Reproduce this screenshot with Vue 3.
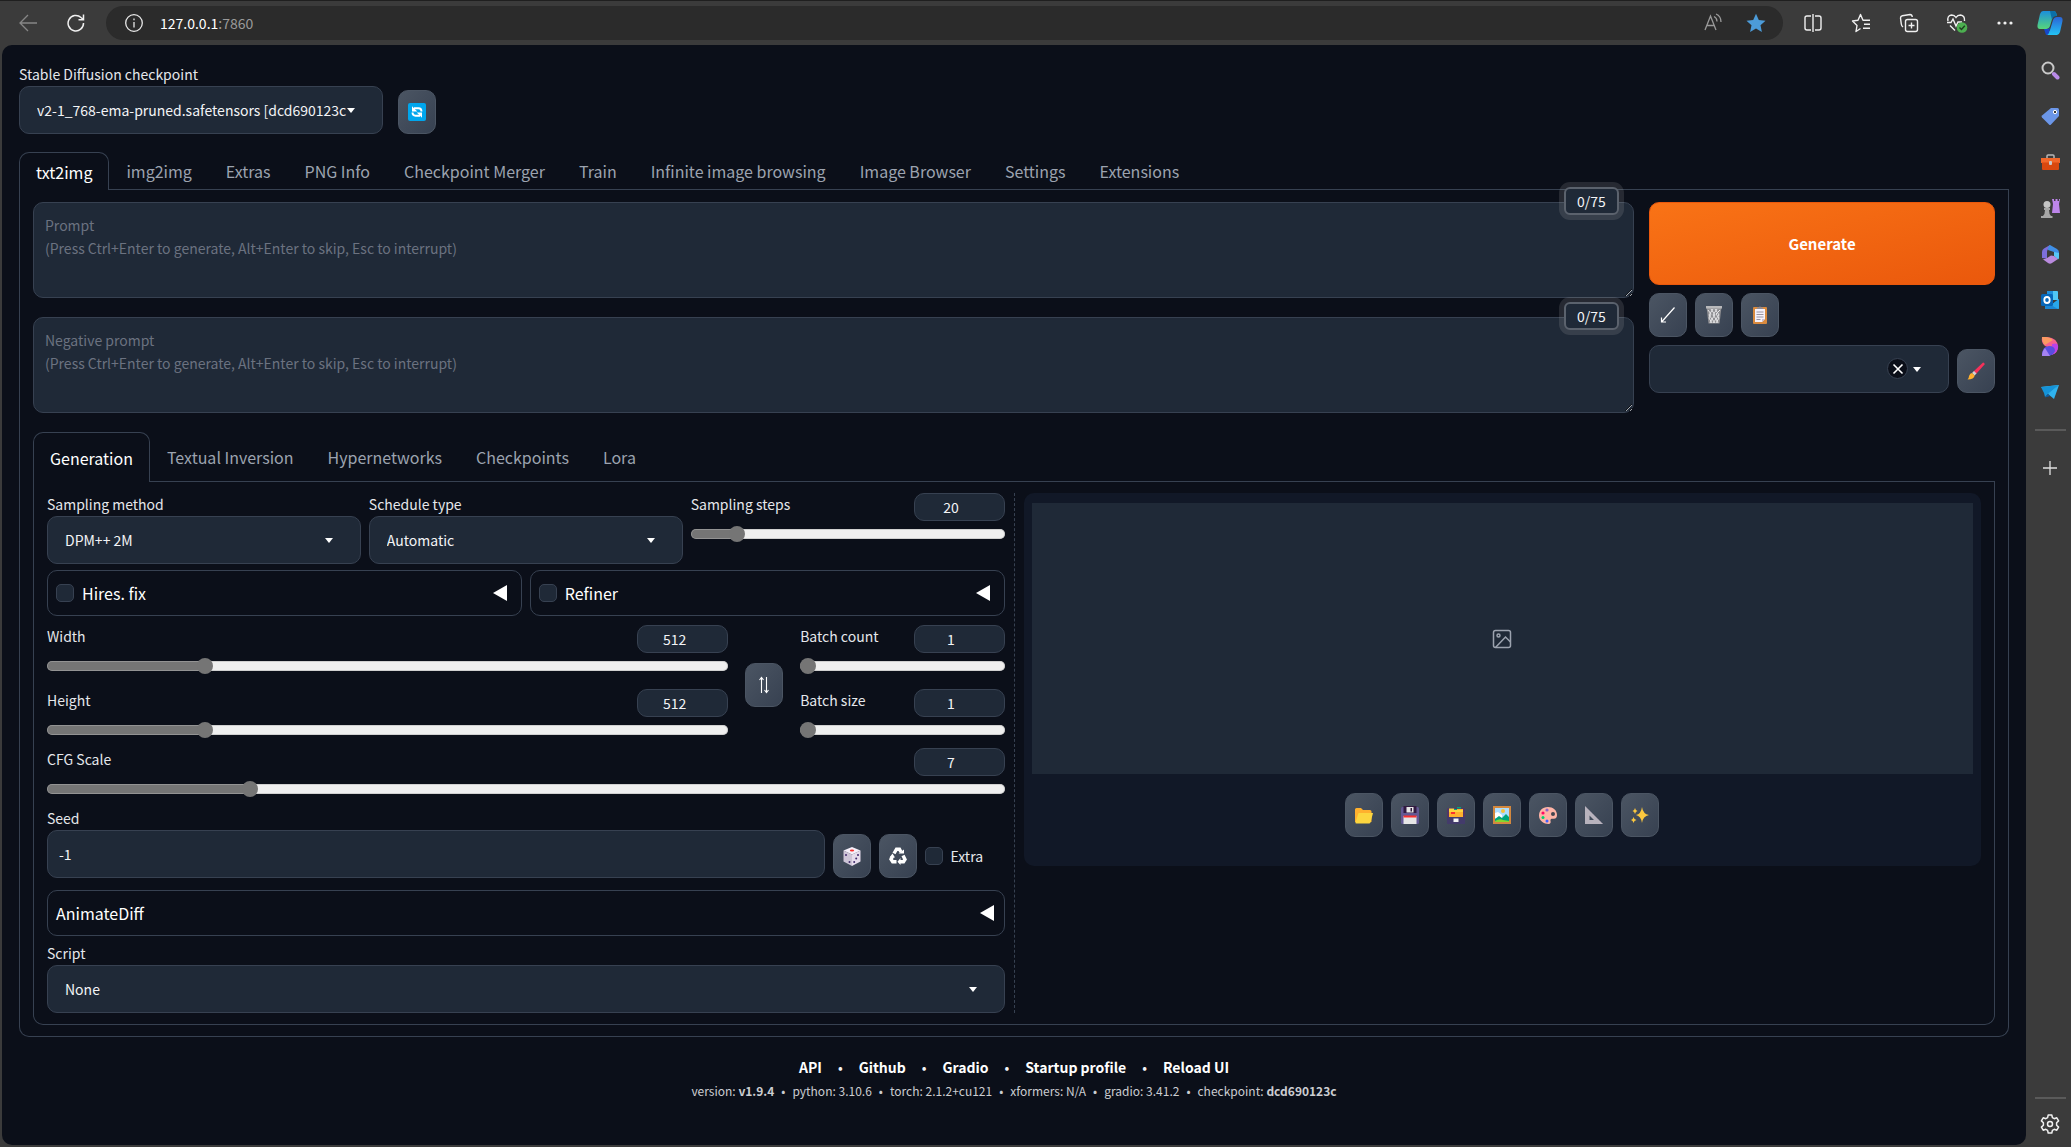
<script setup>
import { ref } from 'vue'

const hint = '(Press Ctrl+Enter to generate, Alt+Enter to skip, Esc to interrupt)'
const prompts = [
  { id: 'prompt', label: 'Prompt' },
  { id: 'negative-prompt', label: 'Negative prompt' },
]

const mainTabs = ['txt2img', 'img2img', 'Extras', 'PNG Info', 'Checkpoint Merger', 'Train', 'Infinite image browsing', 'Image Browser', 'Settings', 'Extensions']
const mainTab = ref('txt2img')
const genTabs = ['Generation', 'Textual Inversion', 'Hypernetworks', 'Checkpoints', 'Lora']
const genTab = ref('Generation')

const steps = ref({ id: 'steps', label: 'Sampling steps', value: 20, min: 1, max: 150 })
const sizes = ref([
  { id: 'width', label: 'Width', value: 512, min: 64, max: 2048 },
  { id: 'height', label: 'Height', value: 512, min: 64, max: 2048 },
])
const batches = ref([
  { id: 'batch-count', label: 'Batch count', value: 1, min: 1, max: 100 },
  { id: 'batch-size', label: 'Batch size', value: 1, min: 1, max: 8 },
])
const cfg = ref({ id: 'cfg', label: 'CFG Scale', value: 7, min: 1, max: 30 })
const seed = ref('-1')

// Filled share of a slider's track, measured to the centre of the thumb.
function fill(s) {
  const share = (s.value - s.min) / (s.max - s.min)
  return { '--fill': `calc(8px + (100% - 16px) * ${share})` }
}

const toolIcons = [
  { name: 'Read generation parameters', art: '<path d="M15.500 1.500 3 15.500M2.500 11.500V16H7" fill="none" stroke="#fff" stroke-width="1.200"/>' },
  { name: 'Clear prompt', art: '<path d="M1.500 1h15l-2 16.500h-11z" fill="#8f8f92"/><path d="M1 0h16v2.500H1z" fill="#b9b9bb"/><path d="M3 4l3 4-2 4 3 5M6 3l4 6-3 4 3 4M10 3l4 6-3 4 2 4M15 4l-4 4 3 4-3 5M12 3 8 9l3 4-3 4M8 3 4 9l3 4-2 4" fill="none" stroke="#e6e6e8"/>' },
  { name: 'Apply styles', art: '<rect x="2" y="1" width="14" height="17" rx="1" fill="#d98a3e"/><path d="M4 3h10v10l-3 3H4z" fill="#f5f1fa"/><path d="M11 16v-3h3z" fill="#c9bfd4"/><path d="M6 3V1.500h2a1 1 0 0 1 2 0h2V3z" fill="#8d8a94"/><path d="M5.500 6h7M5.500 8.500h7M5.500 11h7M5.500 13.500h4" stroke="#9a95a3" fill="none"/>' },
]

const galleryIcons = [
  { name: 'Open images output directory', art: '<path d="M0 3.500Q0 2 1.500 2H6l2 2h7q1.500 0 1.500 1.500V16H0z" fill="#ffb02e"/><path d="M3.500 7H18l-2.500 9.500Q15.200 17.500 14 17.500H1.500Q0 17.500.5 16z" fill="#fcd53f"/>' },
  { name: 'Save the image', art: '<rect x="0" y="1" width="18" height="17" rx="1.500" fill="#635994"/><path d="M2.500 0h13v7h-13z" fill="#321b41"/><path d="M5.500 1h7v5.500h-7z" fill="#e6e6e6"/><path d="M9.500 2H11v3.500H9.500z" fill="#321b41"/><path d="M2.500 10h13v8h-13z" fill="#e6e6e6"/><path d="M2.500 9.500h13v2h-13z" fill="#f8312f"/>' },
  { name: 'Save zip archive', art: '<rect x="0" y="2" width="18" height="16" rx="1.500" fill="#533566"/><path d="M2 3h14v8H2z" fill="#ffb02e"/><path d="M2 2.500h5l1 1.500h8v2H2z" fill="#fcd53f"/><path d="M10 1h4v1.500h-4zM7 3h3v1H7z" fill="#00a67d"/><path d="M4 6h4v2H4z" fill="#f8312f"/><path d="M0 11h18v6q0 1-1 1H1q-1 0-1-1z" fill="#433b6b"/><path d="M6.500 12.500h5v3.500h-5z" fill="#f4f4f4"/>' },
  { name: 'Send to img2img', art: '<rect width="18" height="18" fill="#d3883e"/><path d="M2 2h14v14H2z" fill="#aeddff"/><path d="M2 7l3-1 4 3v3H2z" fill="#fff"/><circle cx="10" cy="5" r="2" fill="#f9c23c"/><path d="M2 13l4-3 3 2 4-4 3 3v5H2z" fill="#00a67d"/><path d="M2 15q5-3 8-1l6 1v1H2z" fill="#86d72f"/>' },
  { name: 'Send to inpaint', art: '<path d="M9 1C3 1 0 5 0 9.500 0 15 5 18 9.500 18c2 0 2.500-1.500 2-3-.5-2 1-2.500 3-2.200 2.500.2 3.500-1.500 3.500-3.800C18 4 14 1 9 1z" fill="#ffb5a7"/><circle cx="14" cy="8" r="2" fill="#45454f"/><circle cx="8" cy="4" r="1.600" fill="#8d65c5"/><circle cx="4" cy="7" r="1.600" fill="#ff0a63"/><circle cx="4" cy="11.500" r="1.500" fill="#00d26a"/><circle cx="8" cy="15" r="1.500" fill="#3f5fff"/>' },
  { name: 'Send to extras', art: '<path d="M0 0 18 18H0zM4.500 9.500v4.500H9z" fill="#b8b3bd" fill-rule="evenodd"/><path d="m1 1 17 17" fill="none" stroke="#8b8496" stroke-dasharray="1 1.500"/>' },
  { name: 'Upscale the image', art: '<path d="M11 1q1 7 7 8-6 1-7 8-1-7-6-8 5-1 6-8zM4 2q.5 2.500 2.500 3Q4.500 5.500 4 8 3.500 5.500 1.500 5 3.500 4.500 4 2zM2.500 11q.5 2.500 3 3-2.500.5-3 3-.5-2.500-2.500-3 2-.5 2.500-3z" fill="#fcc83f"/>' },
]

const sideIcons = [
  { name: 'Search', art: '<circle cx="7" cy="7" r="5.500" fill="none" stroke="#c9c9c9" stroke-width="2"/><path d="m13 13 3.500 3.500" fill="none" stroke="#b98be8" stroke-width="4" stroke-linecap="round"/>' },
  { name: 'Shopping', art: '<path d="M10 1h6.500Q18 1 18 2.500V9l-8 8.500q-1 1-2 0L1 10.500q-1-1 0-2z" fill="#6b96e8"/><circle cx="14" cy="5" r="1.700" fill="#3b3b3b" stroke="#fff"/>' },
  { name: 'Tools', art: '<path d="M6 5V3q0-1 1-1h5q1 0 1 1v2" fill="none" stroke="#b8b8b8" stroke-width="1.500"/><path d="M0 5h19v5H0z" fill="#f2672a"/><path d="M1 9.500h17V16q0 1-1 1H2q-1 0-1-1z" fill="#d9480f"/><rect x="8" y="8" width="3" height="4" rx="1" fill="#c9c9c9"/>' },
  { name: 'Games', art: '<path d="M11 0h2v2h1.500V0h2v2H18V0h1l-1 5 1 9h-8l1-9z" fill="#bd85ea"/><circle cx="6" cy="5.500" r="3.500" fill="#c4c4c4"/><path d="M3 9h6v2H8q0 4 2 6h1.500v2.500H0V17h2q2-2 2-6H3z" fill="#a6a6a6"/>' },
  { name: 'Microsoft 365', art: '<path d="m9 0-6 3.500Q1 4.700 1 7v6l5 .5V7q0-3 3-4z" fill="#7d6fdc"/><path d="m9 0 7 4q2 1 2 3.500V13l-5-2.500V7L7 5q0-4 2-5z" fill="#3f8fe6"/><path d="m13 7 5 1v5q0 1.500-1.500 1l-3.500-3z" fill="#56c6f5"/><path d="m6 13 4-2.500 3 .5 4 3-6 4q-2 1.500-4 0l-5.500-4q2 .5 4.500-1z" fill="#b98ade"/>' },
  { name: 'Outlook', art: '<path d="M7 0h9q1 0 1 1v8H6V1q0-1 1-1z" fill="#50c7f5"/><path d="M6 0h6v9H6z" fill="#1e8fdc"/><path d="M4 9l7 4 7-5v9q0 1-1 1H4z" fill="#1b87d4"/><path d="m18 8-8 6 7 4q1 0 1-1z" fill="#2aa7ea"/><rect y="3" width="12" height="12" rx="1.500" fill="#0767b8"/><ellipse cx="6" cy="9" rx="2.700" ry="3" fill="none" stroke="#fff" stroke-width="1.800"/>' },
  { name: 'Designer', art: '<path d="M1 0h5q11 1 11 10-1 7-5 7-3-7-8-8-4-3-3-9z" fill="#f6608f"/><path d="M1 0h4q4 0 7 3L4 8Q1 5 1 0z" fill="#fb9a62"/><path d="M11 7q7-2 6 4-1 5-6 7z" fill="#bb42e8"/><path d="M1 19q0-10 7-10 6 0 6 5-2 5-8 5z" fill="#5a4de0"/><path d="M1 19q0-5 3-8l5 8z" fill="#a583f2"/>' },
  { name: 'Drop', art: '<path d="M0 4 18 2 8 11z" fill="#49c5f3"/><path d="M0 4l3 6 1 4 3-3L18 2z" fill="#1593d8"/><path d="M18 2 7 11l6 5z" fill="#2fb2ee"/><path d="M4 14.500l3-3.500 2 2z" fill="#0b5fa8"/>' },
]
</script>

<template>
  <div class="browser">
    <header class="toolbar">
      <button class="bar-btn" aria-label="Back">
        <svg width="18" height="18" viewBox="0 0 18 18" fill="none" stroke="#868686" stroke-width="1.300"><path d="M18 9H1M9 1 1 9l8 8" /></svg>
      </button>
      <button class="bar-btn" aria-label="Reload">
        <svg width="18" height="18" viewBox="0 0 18 18" fill="none" stroke="#f0f0f0" stroke-width="1.500"><path d="M16.500 9A7.700 7.700 0 1 1 14 3.500L16.300 5.500M16.500.5v5.200h-5" /></svg>
      </button>
      <div class="address">
        <svg width="20" height="20" viewBox="0 0 20 20" fill="none" stroke="#e8e8e8" stroke-width="1.300"><circle cx="10" cy="10" r="8.300" /><path d="M10 9v5.500" /><path d="M10 5.500v1.700" /></svg>
        <span class="url">127.0.0.1<span class="port">:7860</span></span>
        <svg width="20" height="20" viewBox="0 0 20 20" fill="none" stroke="#9a9a9a" stroke-width="1.300"><path d="M2 17 7.500 3 13 17M4 12.500h7M11 3.500q3 1.500 3 5M13 1q5 2 5 8" /></svg>
        <svg width="20" height="20" viewBox="0 0 20 20" fill="#4c9bd8"><path d="M10 .8 12.800 7l6.700.7-5 4.600 1.400 6.700-5.900-3.400L4.100 19l1.400-6.700-5-4.600L7.200 7z" /></svg>
      </div>
      <div class="actions">
        <button class="bar-btn" aria-label="Split screen">
          <svg width="20" height="20" viewBox="0 0 20 20" fill="none" stroke="#f0f0f0" stroke-width="1.400"><path d="M8 3H4Q2 3 2 5v10q0 2 2 2h4M12 3h4q2 0 2 2v10q0 2-2 2h-4M10 1v18" /></svg>
        </button>
        <button class="bar-btn" aria-label="Favorites">
          <svg width="20" height="20" viewBox="0 0 20 20" fill="none" stroke="#f0f0f0" stroke-width="1.400"><path d="M9.500 15.500 5 18.500l1-6L1.500 8l5.500-.8L9.500 1.500 12 7.200h7M13 11.200h6M12 15.200h7" stroke-linejoin="round" /></svg>
        </button>
        <button class="bar-btn" aria-label="Collections">
          <svg width="20" height="20" viewBox="0 0 20 20" fill="none" stroke="#f0f0f0" stroke-width="1.400"><rect x="6.500" y="6.500" width="12" height="12" rx="2" /><path d="M12.500 9.500v6M9.500 12.500h6M4 14Q2.500 13 2.300 11L1.500 5q0-1.800 1.800-2.200L11 1.500q2 0 2.300 2.500" /></svg>
        </button>
        <button class="bar-btn" aria-label="Browser essentials">
          <svg width="22" height="20" viewBox="0 0 22 20" fill="none" stroke="#f0f0f0" stroke-width="1.400"><path d="M2 8Q1 2.500 5.500 2 8.500 2 10 4.500 11.500 2 14.500 2 19 2.500 18.500 8M4 12.500l5 5M1 9.500h4l2-3.500 3 7 2-4h4" /><circle cx="16" cy="14.500" r="5.300" fill="#4caf50" stroke="none" /><path d="m13.500 14.500 2 2 3.300-3.700" stroke="#1f3d20" /></svg>
        </button>
        <button class="bar-btn" aria-label="Settings and more">
          <svg width="18" height="18" viewBox="0 0 18 18" fill="#f0f0f0"><circle cx="3" cy="9" r="1.600" /><circle cx="9" cy="9" r="1.600" /><circle cx="15" cy="9" r="1.600" /></svg>
        </button>
        <button class="bar-btn copilot" aria-label="Copilot">
          <svg width="26" height="26" viewBox="0 0 26 26">
            <defs>
              <linearGradient id="cop-a" x1="0" y1="0" x2="0" y2="1"><stop stop-color="#1b8fdc" /><stop offset="1" stop-color="#57d67a" /></linearGradient>
              <linearGradient id="cop-b" x1="0" y1="0" x2="0" y2="1"><stop stop-color="#2b63d6" /><stop offset="1" stop-color="#22c4f5" /></linearGradient>
            </defs>
            <path d="M6 1h11q2 0 3 5h-4l-3 10q-1 3-4 3H3q-3 0-2.500-4L3 4q1-3 3-3z" fill="url(#cop-a)" />
            <path d="M20 7h3q3 0 2.500 4L23 22q-1 3-3 3H10l3-5 3-10q1-3 4-3z" fill="url(#cop-b)" />
            <path d="M13 1h4q2 0 3 5-4 0-5 4z" fill="#0b6fa8" /><path d="M7 19h3q2 0 3-2l-1 6q-1 2-3 2-1-3-2-6z" fill="#1747c9" />
          </svg>
        </button>
      </div>
    </header>

    <div class="body">
      <main class="page">
        <div class="checkpoint">
          <div class="field">
            <label for="checkpoint">Stable Diffusion checkpoint</label>
            <div class="select">
              <select id="checkpoint"><option>v2-1_768-ema-pruned.safetensors [dcd690123c</option></select>
              <svg class="caret" viewBox="0 0 8 5"><path d="M0 0h8L4 5z" /></svg>
            </div>
          </div>
          <button class="tool" aria-label="Refresh checkpoints">
            <svg width="18" height="18" viewBox="0 0 18 18"><rect width="18" height="18" rx="2" fill="#00a6ed" /><path d="M6 5.200h4.500q3 0 3 3.300M12 12.800H7.500q-3 0-3-3.300" fill="none" stroke="#fff" stroke-width="1.900" /><path d="M4 3.200v5.300h5.300zM14 14.800V9.500H8.700z" fill="#fff" /></svg>
          </button>
        </div>

        <div class="tabs" role="tablist">
          <button v-for="t in mainTabs" :key="t" class="tab" :class="{ active: t === mainTab }" role="tab" @click="mainTab = t">{{ t }}</button>
          <span class="rest"></span>
        </div>

        <section class="panel">
          <div class="top">
            <div class="prompts">
              <div v-for="p in prompts" :key="p.id" class="prompt">
                <textarea :id="p.id" :aria-label="p.label" :placeholder="p.label + '\n' + hint"></textarea>
                <span class="counter">0/75</span>
              </div>
            </div>
            <div class="run">
              <button class="generate">Generate</button>
              <div class="tools">
                <button v-for="i in toolIcons" :key="i.name" class="tool" :aria-label="i.name"><svg width="18" height="18" viewBox="0 0 18 18" v-html="i.art"></svg></button>
              </div>
              <div class="styles">
                <div class="select">
                  <select id="styles" aria-label="Styles"><option></option></select>
                  <button class="clear" aria-label="Clear styles"><svg width="12" height="12" viewBox="0 0 12 12"><path d="m1.500 1.500 9 9M10.500 1.500l-9 9" stroke="#fff" stroke-width="1.600" /></svg></button>
                  <svg class="caret" viewBox="0 0 8 5"><path d="M0 0h8L4 5z" /></svg>
                </div>
                <button class="tool" aria-label="Edit styles">
                  <svg width="18" height="18" viewBox="0 0 18 18"><path d="M16 .5q2 0 1.500 2L9 12 6.500 9.500z" fill="#f8315a" /><path d="m7 9 2.500 2.500-2 2L5 11z" fill="#d3d3d3" /><path d="M5 11l2.700 2.500q-.7 4-7.200 4 1.500-1.500 1.500-3.500 1-3 3-3z" fill="#ffb02e" /></svg>
                </button>
              </div>
            </div>
          </div>

          <div class="tabs inner" role="tablist">
            <button v-for="t in genTabs" :key="t" class="tab" :class="{ active: t === genTab }" role="tab" @click="genTab = t">{{ t }}</button>
            <span class="rest"></span>
          </div>

          <section class="panel gen">
            <div class="settings">
              <div class="sampling">
                <div class="field">
                  <label for="sampler">Sampling method</label>
                  <div class="select">
                    <select id="sampler"><option>DPM++ 2M</option></select>
                    <svg class="caret" viewBox="0 0 8 5"><path d="M0 0h8L4 5z" /></svg>
                  </div>
                </div>
                <div class="field">
                  <label for="scheduler">Schedule type</label>
                  <div class="select">
                    <select id="scheduler"><option>Automatic</option></select>
                    <svg class="caret" viewBox="0 0 8 5"><path d="M0 0h8L4 5z" /></svg>
                  </div>
                </div>
                <div class="slider">
                  <div class="head">
                    <label :for="steps.id">{{ steps.label }}</label>
                    <input v-model.number="steps.value" type="number" :aria-label="steps.label + ' value'" />
                  </div>
                  <input :id="steps.id" v-model.number="steps.value" type="range" :min="steps.min" :max="steps.max" :style="fill(steps)" />
                </div>
              </div>

              <div class="accordions">
                <div v-for="a in ['Hires. fix', 'Refiner']" :key="a" class="accordion checked">
                  <label><input type="checkbox" />{{ a }}</label>
                  <svg class="arrow" width="14" height="16" viewBox="0 0 14 16"><path d="M14 0v16L0 8z" /></svg>
                </div>
              </div>

              <div class="dimensions">
                <div class="stack">
                  <div v-for="s in sizes" :key="s.id" class="slider">
                    <div class="head">
                      <label :for="s.id">{{ s.label }}</label>
                      <input v-model.number="s.value" type="number" :aria-label="s.label + ' value'" />
                    </div>
                    <input :id="s.id" v-model.number="s.value" type="range" :min="s.min" :max="s.max" :style="fill(s)" />
                  </div>
                </div>
                <button class="tool swap" aria-label="Switch width and height">
                  <svg width="12" height="18" viewBox="0 0 12 18" fill="none" stroke="#fff" stroke-width="1.100"><path d="M3.500 17V2M1.500 4 3.500 1.500 5.500 4M8.500 1v15M6.500 14l2 2.500 2-2.500" /></svg>
                </button>
                <div class="stack">
                  <div v-for="s in batches" :key="s.id" class="slider">
                    <div class="head">
                      <label :for="s.id">{{ s.label }}</label>
                      <input v-model.number="s.value" type="number" :aria-label="s.label + ' value'" />
                    </div>
                    <input :id="s.id" v-model.number="s.value" type="range" :min="s.min" :max="s.max" :style="fill(s)" />
                  </div>
                </div>
              </div>

              <div class="slider cfg">
                <div class="head">
                  <label :for="cfg.id">{{ cfg.label }}</label>
                  <input v-model.number="cfg.value" type="number" :aria-label="cfg.label + ' value'" />
                </div>
                <input :id="cfg.id" v-model.number="cfg.value" type="range" :min="cfg.min" :max="cfg.max" :style="fill(cfg)" />
              </div>

              <div class="seed">
                <div class="seed-field">
                  <label for="seed">Seed</label>
                  <input id="seed" v-model="seed" type="text" />
                </div>
                <button class="tool" aria-label="Random seed">
                  <svg width="18" height="19" viewBox="0 0 18 19"><path d="M9 0 17.500 3.500 9 7.500.5 3.500z" fill="#f6f0fa" /><path d="M.5 3.500 9 7.500V19L.5 14.500z" fill="#cdc4d6" /><path d="M17.500 3.500 9 7.500V19l8.500-4.500z" fill="#e6dcec" /><ellipse cx="9" cy="3.600" rx="2.200" ry="1" fill="#f8312f" /><g fill="#402a6b"><circle cx="3" cy="8" r="1" /><circle cx="6.500" cy="15" r="1" /><circle cx="15" cy="8" r="1" /><circle cx="13.200" cy="11.500" r="1" /><circle cx="11.200" cy="15" r="1" /></g></svg>
                </button>
                <button class="tool" aria-label="Reuse seed">
                  <svg width="18" height="18" viewBox="0 0 18 18" fill="none" stroke="#fff" stroke-width="3.400"><path d="M5 6.500 7.500 2.200h3L12 5" /><path d="m14 8.500 2 4-1.500 2.300h-3.500" /><path d="M7.500 14.800H3.700L2 12.200 3.500 9.500" /><path d="M9.500 6.500h5.500V2.500zM11.500 11v7l-3-3.300zM.5 10.500 3.500 6.500 6 10.500z" fill="#fff" stroke="none" /></svg>
                </button>
                <label class="extra"><input type="checkbox" />Extra</label>
              </div>

              <div class="accordion animate">
                <span>AnimateDiff</span>
                <svg class="arrow" width="14" height="16" viewBox="0 0 14 16"><path d="M14 0v16L0 8z" /></svg>
              </div>

              <div class="field script">
                <label for="script">Script</label>
                <div class="select">
                  <select id="script"><option>None</option></select>
                  <svg class="caret" viewBox="0 0 8 5"><path d="M0 0h8L4 5z" /></svg>
                </div>
              </div>
            </div>

            <div class="divider"></div>

            <div class="gallery">
              <div class="preview">
                <svg width="20" height="20" viewBox="0 0 20 20" fill="none" stroke="#9ca3af" stroke-width="1.500"><rect x="1.500" y="1.500" width="17" height="17" rx="2" /><circle cx="6.500" cy="6.500" r="1.500" /><path d="m18.500 13-5-5-10 10.500" /></svg>
              </div>
              <div class="tools">
                <button v-for="i in galleryIcons" :key="i.name" class="tool" :aria-label="i.name"><svg width="18" height="18" viewBox="0 0 18 18" v-html="i.art"></svg></button>
              </div>
            </div>
          </section>
        </section>

        <footer class="footer">
          <div class="links">
            <a href="#api">API</a><i>•</i><a href="#github">Github</a><i>•</i><a href="#gradio">Gradio</a><i>•</i><a href="#profile">Startup profile</a><i>•</i><a href="#reload">Reload UI</a>
          </div>
          <div class="versions">
            <span>version: <b>v1.9.4</b></span><i>•</i><span>python: 3.10.6</span><i>•</i><span>torch: 2.1.2+cu121</span><i>•</i><span>xformers: N/A</span><i>•</i><span>gradio: 3.41.2</span><i>•</i><span>checkpoint: <b>dcd690123c</b></span>
          </div>
        </footer>
      </main>

      <nav class="sidebar" aria-label="Browser sidebar">
        <button v-for="i in sideIcons" :key="i.name" class="side-btn" :aria-label="i.name"><svg width="19" height="19" viewBox="0 0 19 19" v-html="i.art"></svg></button>
        <hr />
        <button class="side-btn add" aria-label="Customize"><svg width="14" height="14" viewBox="0 0 14 14"><path d="M7 0v14M0 7h14" stroke="#e0e0e0" stroke-width="1.300" /></svg></button>
        <hr class="last" />
        <button class="side-btn" aria-label="Settings">
          <svg width="20" height="20" viewBox="0 0 20 20" fill="none" stroke="#f0f0f0" stroke-width="1.500"><path d="M8.200 1h3.600l.6 2.700 1.800 1 2.600-.9 1.800 3.100-2 1.900v2.400l2 1.900-1.800 3.100-2.600-.9-1.800 1-.6 2.700H8.200l-.6-2.700-1.800-1-2.600.9-1.800-3.100 2-1.900V8.800l-2-1.900 1.800-3.100 2.600.9 1.800-1z" stroke-linejoin="round" /><circle cx="10" cy="10" r="2.500" /></svg>
        </button>
      </nav>
    </div>
  </div>
</template>

<style>
body {
  background: #3b3b3b;
}
</style>

<style scoped>
.browser {
  --line: #374151;
  --input: #1f2937;
  display: flex;
  flex-direction: column;
  min-height: 100vh;
  background: #3b3b3b;
  color: #f3f4f6;
  color-scheme: dark;
  font-family: "Noto Sans CJK JP", "Noto Sans", sans-serif;
  font-size: 14px;
  line-height: 20px;
}
*,
*::before,
*::after {
  box-sizing: border-box;
}
button,
input,
select,
textarea {
  margin: 0;
  font: inherit;
  color: inherit;
}
button {
  padding: 0;
  border: 0;
  background: none;
  display: flex;
  align-items: center;
  justify-content: center;
}
svg {
  flex: none;
}

/* Browser toolbar */
.toolbar {
  display: flex;
  align-items: center;
  height: 45px;
  padding-left: 4px;
  border-top: 1px solid #1f1f1f;
}
.bar-btn {
  width: 48px;
  height: 34px;
}
.bar-btn.copilot {
  width: 42px;
}
.address {
  flex: 1;
  display: flex;
  align-items: center;
  height: 34px;
  margin: 0 6px;
  padding: 0 17px 0 18px;
  border-radius: 17px;
  background: #2b2b2b;
}
.url {
  flex: 1;
  margin-left: 16px;
  color: #fff;
}
.port {
  color: #9a9a9a;
}
.address svg:last-child {
  margin-left: 23px;
}
.actions {
  display: flex;
}

.body {
  flex: 1;
  display: flex;
}
.page {
  flex: 1;
  min-width: 0;
  margin: 0 0 2px 2px;
  padding: 20px 17px;
  border-radius: 10px;
  background: #0b0f19;
}
.sidebar {
  display: flex;
  flex-direction: column;
  align-items: center;
  width: 45px;
  padding-top: 2px;
  padding-left: 3px;
}
.side-btn {
  width: 42px;
  height: 46px;
}
.sidebar hr {
  width: 31px;
  height: 2px;
  margin: 14px 0;
  border: 0;
  background: #5a5a5a;
}
.sidebar .last {
  margin: auto 0 2px;
}

/* Form controls */
.field label,
.seed-field label {
  display: block;
  padding-bottom: 2px;
  color: #e5e7eb;
  line-height: 19px;
}
.select {
  position: relative;
}
.select select {
  display: block;
  width: 100%;
  height: 48px;
  padding: 0 32px 0 17px;
  border: 1px solid var(--line);
  border-radius: 10px;
  background: var(--input);
  appearance: none;
}
.caret {
  position: absolute;
  top: 22px;
  right: 28px;
  width: 8px;
  height: 5px;
  fill: #fff;
  pointer-events: none;
}
.tool {
  width: 38px;
  height: 44px;
  flex: none;
  border: 1px solid #4b5563;
  border-radius: 10px;
  background: linear-gradient(to bottom right, #4b5563, #374151);
}
.tools {
  display: flex;
  gap: 8px;
}
input[type="checkbox"] {
  appearance: none;
  width: 18px;
  height: 18px;
  flex: none;
  border: 1px solid var(--line);
  border-radius: 5px;
  background: var(--input);
}
.slider .head {
  display: flex;
  justify-content: space-between;
  height: 28px;
}
.slider label {
  padding-top: 1px;
  color: #e5e7eb;
}
input[type="number"] {
  width: 91px;
  height: 28px;
  padding: 0 16px 0 0;
  border: 1px solid var(--line);
  border-radius: 10px;
  background: var(--input);
  text-align: center;
  appearance: textfield;
}
input[type="number"]::-webkit-inner-spin-button {
  display: none;
}
input[type="range"] {
  display: block;
  width: 100%;
  height: 16px;
  margin-top: 5px;
  appearance: none;
  background: none;
}
input[type="range"]::-webkit-slider-runnable-track {
  height: 10px;
  border-radius: 5px;
  background: linear-gradient(to right, #757575 var(--fill), #efefef var(--fill));
  box-shadow: inset 0 0 0 1px #b2b2b280;
}
input[type="range"]::-webkit-slider-thumb {
  width: 16px;
  height: 16px;
  margin-top: -3px;
  border-radius: 50%;
  background: #757575;
  appearance: none;
}

.checkpoint {
  display: flex;
  align-items: flex-end;
  gap: 15px;
  margin-bottom: 18px;
}
.checkpoint .field {
  width: 364px;
}

/* Tabs */
.tabs {
  display: flex;
  height: 38px;
}
.tabs.inner {
  height: 50px;
  margin-top: 19px;
}
.tab {
  padding: 0 17px;
  border-bottom: 1px solid var(--line);
  color: #9ca3af;
  font-size: 16px;
  white-space: nowrap;
}
.tab.active {
  padding: 0 16px;
  border: 1px solid var(--line);
  border-bottom: 0;
  border-radius: 10px 10px 0 0;
  color: #fff;
}
.rest {
  flex: 1;
  border-bottom: 1px solid var(--line);
}
.panel {
  padding: 12px 13px 11px;
  border: 1px solid var(--line);
  border-top: 0;
  border-radius: 0 0 10px 10px;
}

/* Prompts and run buttons */
.top {
  display: flex;
  gap: 15px;
}
.prompts {
  flex: 1;
  display: flex;
  flex-direction: column;
  gap: 19px;
}
.prompt {
  position: relative;
  display: flex;
}
textarea {
  flex: 1;
  height: 96px;
  padding: 11px;
  border: 1px solid var(--line);
  border-radius: 10px;
  background: var(--input);
  line-height: 23px;
  resize: vertical;
}
textarea::placeholder {
  color: #6b7280;
}
.counter {
  position: absolute;
  top: -15px;
  right: 15px;
  width: 55px;
  border: 2px solid #5b626d;
  border-radius: 6px;
  background: var(--input);
  box-shadow: 0 0 0 5px #c0c0c026;
  line-height: 24px;
  text-align: center;
}
.run {
  display: flex;
  flex-direction: column;
  gap: 8px;
  width: 346px;
}
.generate {
  height: 83px;
  border: 1px solid #ea580c;
  border-radius: 10px;
  background: linear-gradient(to bottom right, #f97316, #ea580c);
  color: #fff;
  font-size: 15px;
  font-weight: 600;
}
.styles {
  display: flex;
  align-items: flex-end;
  gap: 8px;
}
.styles .select {
  flex: 1;
}
.clear {
  position: absolute;
  top: 13px;
  right: 41px;
  width: 21px;
  height: 21px;
  border: 1px solid var(--line);
  border-radius: 50%;
  background: #0b0f19;
}

/* Generation panel */
.gen {
  display: grid;
  grid-template-columns: minmax(0, 1fr) 1px minmax(0, 1fr);
  gap: 9px;
  padding-top: 11px;
}
.divider {
  border-left: 1px dashed var(--line);
}
.sampling {
  display: grid;
  grid-template-columns: repeat(3, minmax(0, 1fr));
  gap: 8px;
}
.sampling .field {
  padding-top: 2px;
}
.accordions {
  display: grid;
  grid-template-columns: 1fr 1fr;
  gap: 8px;
  margin-top: 6px;
}
.accordion {
  display: flex;
  align-items: center;
  justify-content: space-between;
  height: 46px;
  padding: 0 10px 0 8px;
  border: 1px solid var(--line);
  border-radius: 10px;
  color: #fff;
  font-size: 16px;
}
.accordion.checked {
  padding-right: 14px;
}
.accordion label,
.extra {
  display: flex;
  align-items: center;
  gap: 8px;
}
.arrow {
  fill: #fff;
}
.dimensions {
  display: grid;
  grid-template-columns: 10fr 38px 3fr;
  align-items: center;
  gap: 17px;
  margin-top: 9px;
}
.swap {
  margin-top: 6px;
}
.stack {
  display: grid;
  gap: 15px;
}
.cfg {
  margin-top: 10px;
}
.seed {
  display: flex;
  align-items: flex-end;
  gap: 8px;
  margin-top: 12px;
}
.seed-field {
  flex: 1;
}
#seed {
  display: block;
  width: 100%;
  height: 48px;
  padding: 0 11px;
  border: 1px solid var(--line);
  border-radius: 10px;
  background: var(--input);
}
.extra {
  width: 80px;
  height: 44px;
  color: #e5e7eb;
}
.animate {
  margin-top: 12px;
}
.script {
  margin-top: 8px;
}
.gallery {
  align-self: start;
  display: flex;
  flex-direction: column;
  align-items: center;
  gap: 19px;
  padding: 10px 8px 29px;
  border-radius: 10px;
  background: #111827;
}
.preview {
  display: flex;
  align-items: center;
  justify-content: center;
  align-self: stretch;
  height: 271px;
  background: var(--input);
}

.footer {
  margin-top: 18px;
  text-align: center;
  line-height: 24px;
}
.footer a {
  color: #fff;
  font-weight: 600;
  text-decoration: none;
}
.footer i {
  margin: 0 16px;
  font-style: normal;
}
.versions {
  color: #cbcdd1;
  font-size: 12px;
}
.versions i {
  margin: 0 7px;
}
</style>
